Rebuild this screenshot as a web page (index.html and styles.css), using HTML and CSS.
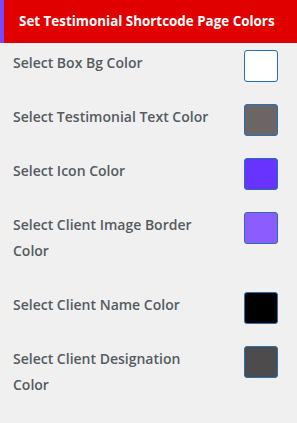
FILE: index.html
```html
<!DOCTYPE html>
<html lang="en">
<head>
  <meta charset="UTF-8">
  <title>Testimonial Shortcode Colors</title>
  <link rel="stylesheet" href="styles.css">
</head>
<body>

<div class="panel">
  <h2 class="panel-title">Set Testimonial Shortcode Page Colors</h2>

  <div class="color-rows">
    <div class="color-row">
      <label class="color-label">Select Box Bg Color</label>
      <span class="swatch swatch-white"></span>
    </div>
    <div class="color-row">
      <label class="color-label">Select Testimonial Text Color</label>
      <span class="swatch swatch-gray"></span>
    </div>
    <div class="color-row">
      <label class="color-label">Select Icon Color</label>
      <span class="swatch swatch-purple"></span>
    </div>
    <div class="color-row">
      <label class="color-label">Select Client Image Border Color</label>
      <span class="swatch swatch-lilac"></span>
    </div>
    <div class="color-row">
      <label class="color-label">Select Client Name Color</label>
      <span class="swatch swatch-black"></span>
    </div>
    <div class="color-row">
      <label class="color-label">Select Client Designation Color</label>
      <span class="swatch swatch-dark"></span>
    </div>
  </div>
</div>

</body>
</html>
```

FILE: styles.css
```css
body {
  margin: 0;
  background: #f0f0f1;
  font-family: "Open Sans", "Noto Sans", sans-serif;
}
.panel {
  width: 297px;
}
.panel-title {
  margin: 0;
  height: 43px;
  box-sizing: border-box;
  padding: 0 0 0 15px;
  border-left: 4px solid #7549ff;
  background: #e10000;
  color: #fff;
  font-size: 13.4px;
  font-weight: 700;
  line-height: 43px;
}
.color-rows {
  padding: 7px 19px 0 13px;
}
.color-row {
  display: flex;
  justify-content: space-between;
  align-items: flex-start;
}
.color-label {
  width: 200px;
  padding-bottom: 28px;
  color: #555b61;
  font-size: 14px;
  font-weight: 600;
  line-height: 26px;
}
.swatch {
  width: 32px;
  height: 30px;
  border: 1px solid #2271b1;
  border-radius: 3px;
}
.swatch-white  { background: #ffffff; }
.swatch-gray   { background: #6b6566; }
.swatch-purple { background: #6933ff; }
.swatch-lilac  { background: #8c5cff; }
.swatch-black  { background: #000000; }
.swatch-dark   { background: #4e4b4c; }
```
